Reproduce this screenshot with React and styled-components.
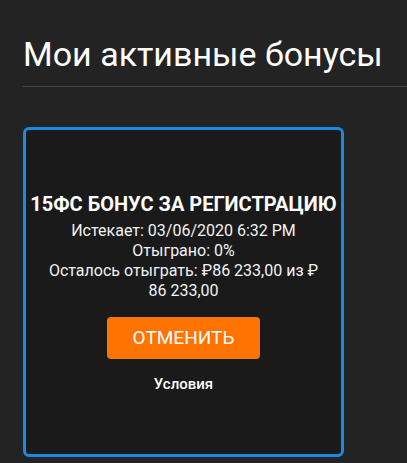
import React from 'react';
import styled, { createGlobalStyle } from 'styled-components';

const GlobalStyle = createGlobalStyle`
  html, body {
    margin: 0;
    padding: 0;
    background: #232323;
    font-family: Roboto, "Noto Sans", sans-serif;
    color: #fff;
  }
`;

const Page = styled.div`
  min-height: 463px;
  padding: 32px 0 0 23px;
  box-sizing: border-box;
  overflow: hidden;
`;

const Heading = styled.h1`
  margin: 0;
  font-size: 34px;
  font-weight: 400;
  line-height: 44px;
  color: #fff;
  padding-bottom: 10px;
  border-bottom: 1px solid #474747;
`;

const Cards = styled.div`
  display: flex;
  padding-top: 40px;
`;

const Card = styled.div`
  width: 321px;
  height: 330px;
  box-sizing: border-box;
  border: 3px solid #1e88e5;
  border-radius: 6px;
  background: #1a1a1a;
  display: flex;
  flex-direction: column;
  align-items: center;
  justify-content: center;
  text-align: center;
`;

const BonusTitle = styled.div`
  font-size: 20px;
  font-weight: 700;
  line-height: 24px;
  margin-bottom: 5px;
  white-space: nowrap;
`;

const InfoLine = styled.div`
  font-size: 16px;
  line-height: 20px;
  color: #f2f2f2;
  max-width: 290px;
`;

const CancelButton = styled.button`
  margin-top: 16px;
  width: 153px;
  height: 42px;
  border: none;
  border-radius: 4px;
  background: #ff7300;
  color: #fff;
  font-family: Roboto, "Noto Sans", sans-serif;
  font-size: 19px;
  font-weight: 400;
  cursor: pointer;
`;

const TermsLink = styled.a`
  margin-top: 16px;
  font-size: 15px;
  font-weight: 500;
  line-height: 18px;
  color: #fff;
  text-decoration: none;
  cursor: pointer;
`;

const App = () => {
  return (
    <>
      <GlobalStyle />
      <Page>
        <Heading>Мои активные бонусы</Heading>
        <Cards>
          <Card>
            <BonusTitle>15ФС БОНУС ЗА РЕГИСТРАЦИЮ</BonusTitle>
            <InfoLine>Истекает: 03/06/2020 6:32 PM</InfoLine>
            <InfoLine>Отыграно: 0%</InfoLine>
            <InfoLine>Осталось отыграть: ₽86 233,00 из ₽ 86 233,00</InfoLine>
            <CancelButton>ОТМЕНИТЬ</CancelButton>
            <TermsLink>Условия</TermsLink>
          </Card>
        </Cards>
      </Page>
    </>
  );
};

export default App;
